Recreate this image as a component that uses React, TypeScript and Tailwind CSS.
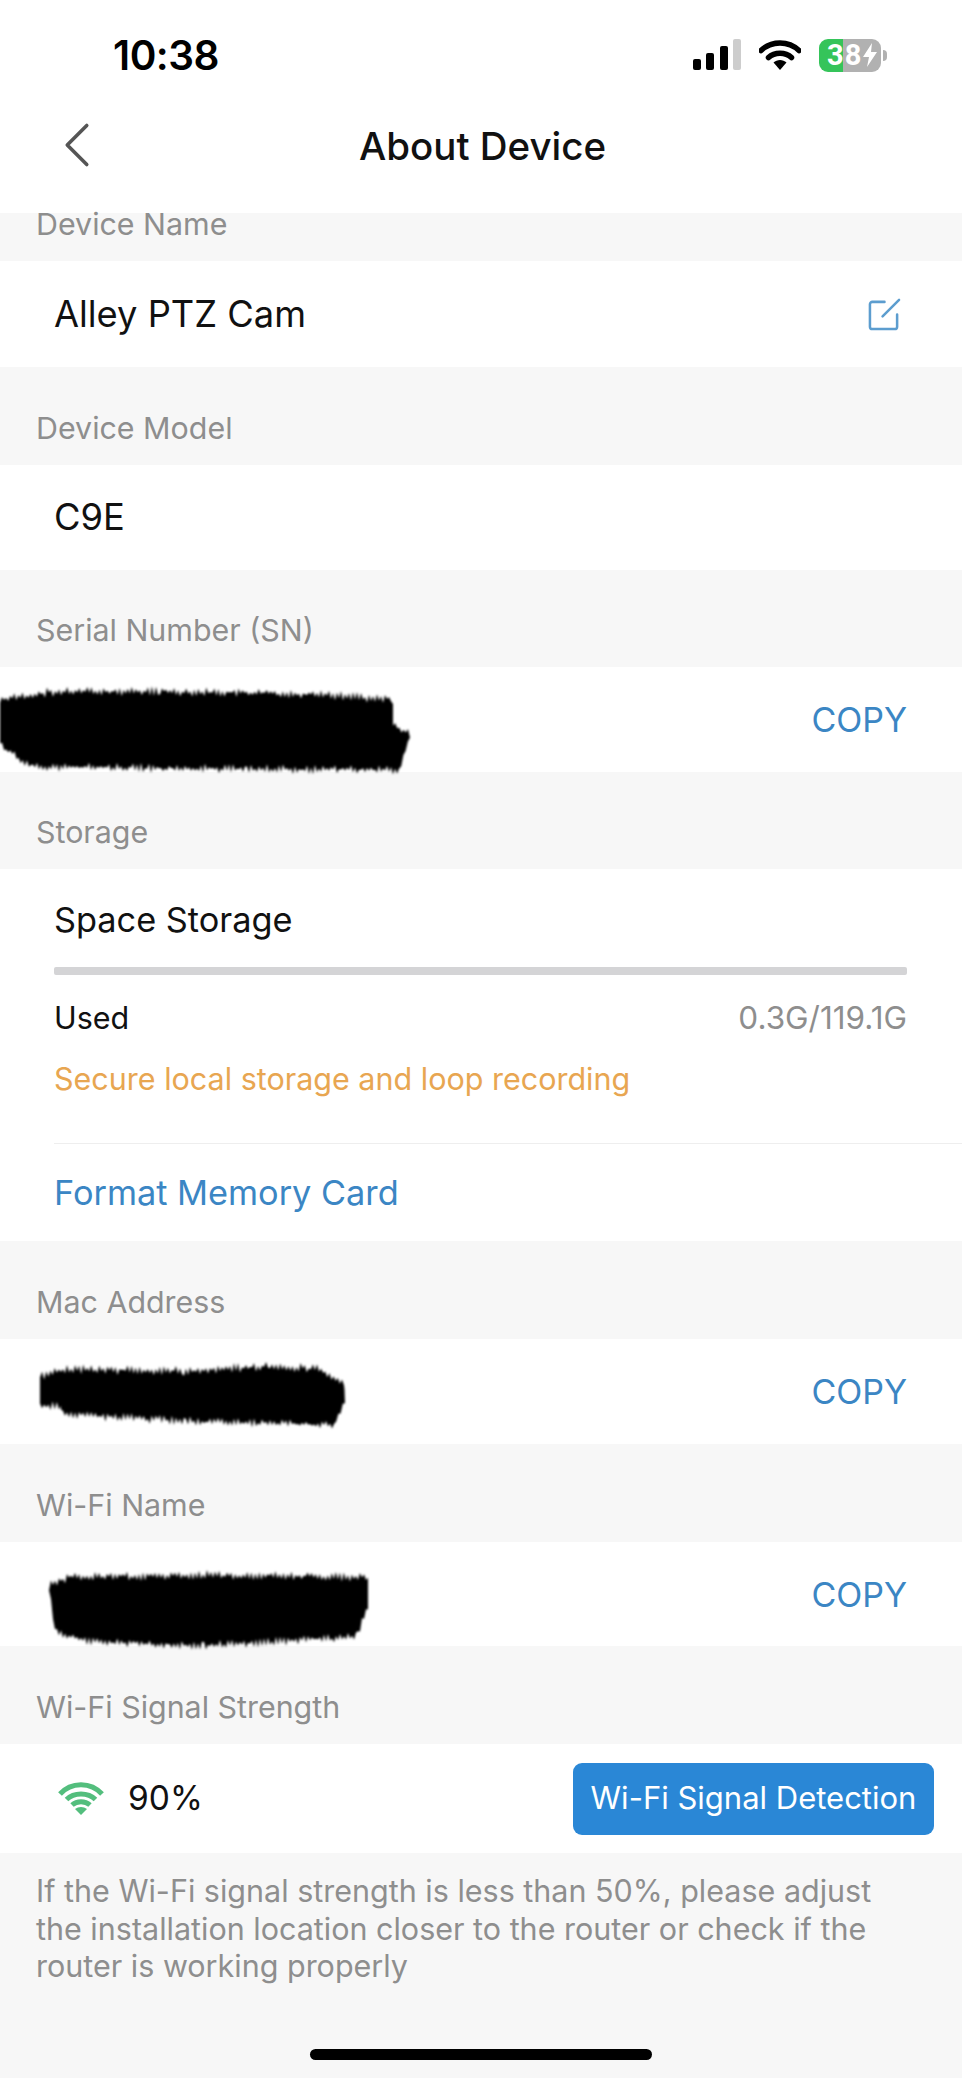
import { ChevronLeft } from "lucide-react";

const font = "font-['Inter','Liberation_Sans',sans-serif]";

// rough marker scribble: jagged outline from top and bottom edge points
function scribble(
  top: [number, number][],
  bottom: [number, number][],
  seed: number,
) {
  let s = seed;
  const rnd = () => {
    s = (s * 9301 + 49297) % 233280;
    return s / 233280;
  };
  const walk = (pts: [number, number][], dir: number) => {
    const out: string[] = [];
    for (let i = 0; i < pts.length - 1; i++) {
      const [x0, y0] = pts[i];
      const [x1, y1] = pts[i + 1];
      const steps = Math.max(2, Math.floor(Math.abs(x1 - x0) / 2));
      for (let k = 0; k < steps; k++) {
        const t = k / steps;
        const jag = (k % 2 === 0 ? 1 : -1) * rnd() * 5 * dir;
        out.push(`${(x0 + (x1 - x0) * t).toFixed(1)},${(y0 + (y1 - y0) * t + jag).toFixed(1)}`);
      }
    }
    return out;
  };
  return `M${[...walk(top, 1), ...walk(bottom, -1)].join("L")}Z`;
}

const serialBlob = scribble(
  [[0, 13], [49, 5], [160, 4], [307, 7], [393, 12], [393, 38], [410, 48], [399, 83]],
  [[399, 83], [245, 82], [31, 80], [0, 58], [0, 13]],
  7,
);
const macBlob = scribble(
  [[0, 14], [21, 6], [144, 8], [230, 3], [279, 6], [304, 22], [305, 37], [294, 61]],
  [[294, 62], [144, 58], [21, 51], [21, 44], [0, 42], [0, 14]],
  23,
);
const wifiBlob = scribble(
  [[0, 15], [20, 6], [160, 4], [319, 6], [319, 36], [307, 66]],
  [[307, 66], [153, 75], [40, 70], [6, 62], [0, 15]],
  41,
);

function Blob({ d, w, h, className }: { d: string; w: number; h: number; className: string }) {
  return (
    <svg width={w} height={h} viewBox={`0 0 ${w} ${h}`} className={`shrink-0 overflow-visible ${className}`}>
      <filter id="marker">
        <feGaussianBlur stdDeviation="0.9" />
      </filter>
      <path d={d} fill="#000" filter="url(#marker)" />
    </svg>
  );
}

function SectionLabel({ text, height = "h-[97px]" }: { text: string; height?: string }) {
  return (
    <div className={`flex shrink-0 items-end px-[36px] pb-[17px] text-[30.4px] leading-[40px] text-[#8e8e8e] ${height}`}>
      {text}
    </div>
  );
}

function Row({ children, height = "h-[105px]" }: { children: React.ReactNode; height?: string }) {
  return (
    <div className={`flex shrink-0 items-center justify-between bg-white pl-[54px] pr-[55px] text-[36.3px] text-[#111] ${height}`}>
      {children}
    </div>
  );
}

function CopyLink() {
  return <span className="text-[34px] text-[#3b86c4]">COPY</span>;
}

function CellBars() {
  return (
    <svg width="48" height="32" viewBox="0 0 48 32" className="shrink-0">
      <rect x="0" y="20" width="8" height="11" rx="2" fill="#000" />
      <rect x="13" y="14" width="8" height="17" rx="2" fill="#000" />
      <rect x="27" y="7" width="8" height="24" rx="2" fill="#000" />
      <rect x="40" y="0" width="8" height="31" rx="2" fill="#cdcdcd" />
    </svg>
  );
}

function StatusWifi() {
  return (
    <svg width="42" height="30" viewBox="0 0 42 30" className="shrink-0">
      <path d="M2 10.5C12.5 0.5 29.5 0.5 40 10.5" fill="none" stroke="#000" strokeWidth="5.5" strokeLinecap="round" />
      <path d="M9.5 17.5C15.5 11.8 26.5 11.8 32.5 17.5" fill="none" stroke="#000" strokeWidth="5.5" strokeLinecap="round" />
      <path d="M14.5 22.5C18 19 24 19 27.5 22.5L21 30Z" fill="#000" />
    </svg>
  );
}

function Battery() {
  return (
    <div className="flex items-center">
      <div className="flex h-[33px] w-[62px] items-center overflow-hidden rounded-[9px] bg-[linear-gradient(90deg,#35c45a_39%,#b1b1b1_39%)] pl-[8px] font-['Roboto',sans-serif] text-[29px] font-bold leading-none tracking-[1px] text-white">
        <span>38</span>
        <svg width="16" height="24" viewBox="0 0 16 24" className="shrink-0">
          <path d="M10 0L1 14H7L5 24L15 9H9Z" fill="#fff" />
        </svg>
      </div>
      <div className="ml-[2px] h-[11px] w-[4px] rounded-r-full bg-[#b1b1b1]" />
    </div>
  );
}

function GreenWifi() {
  return (
    <svg width="46" height="33" viewBox="0 0 46 33" className="shrink-0">
      <g fill="none" stroke="#53be7d" strokeWidth="5">
        <path d="M2 12C13 -0.500 33 -0.500 44 12" />
        <path d="M8.500 17.500C16 10 30 10 37.500 17.500" />
        <path d="M14 23C19 18.500 27 18.500 32 23" />
      </g>
      <path d="M17 27C20.500 24.200 25.500 24.200 29 27L23 33Z" fill="#53be7d" />
    </svg>
  );
}

export default function App() {
  return (
    <div className={`flex h-[2078px] w-full flex-col overflow-hidden bg-[#f7f7f7] ${font}`}>
      <header className="h-[213px] shrink-0 bg-white">
        <div className="flex h-[110px] items-center justify-between pl-[113px] pr-[75px]">
          <span className="pt-[2px] text-[40.500px] font-semibold tracking-[-0.5px] text-black">10:38</span>
          <div className="flex items-center gap-[18px]">
            <CellBars />
            <StatusWifi />
            <Battery />
          </div>
        </div>
        <div className="relative flex h-[72px] items-center justify-center pl-[3px]">
          <ChevronLeft
            size={78}
            strokeWidth={1.1}
            className="absolute left-[38px] -top-[4px] text-[#555]"
          />
          <h1 className="text-[38.5px] font-medium leading-none text-[#111]">About Device</h1>
        </div>
      </header>

      <SectionLabel text="Device Name" height="h-[48px]" />
      <Row height="h-[106px]">
        <span>Alley PTZ Cam</span>
        <svg width="33" height="33" viewBox="0 0 34 34" fill="none" stroke="#5c9dcf" strokeWidth="2.6" strokeLinecap="round" className="mr-[6px]">
          <path d="M17 4H4.5C3 4 2 5 2 6.500V29.500C2 31 3 32 4.500 32H27.500C29 32 30 31 30 29.500V17" />
          <path d="M15 19L32 2" />
        </svg>
      </Row>

      <SectionLabel text="Device Model" height="h-[98px]" />
      <Row>
        <span>C9E</span>
      </Row>

      <SectionLabel text="Serial Number (SN)" />
      <Row>
        <Blob d={serialBlob} w={410} h={88} className="-ml-[54px] mt-[23px]" />
        <CopyLink />
      </Row>

      <SectionLabel text="Storage" />
      <section className="flex h-[372px] shrink-0 flex-col bg-white pl-[54px] text-[#111]">
        <div className="flex h-[98px] shrink-0 items-center pt-[4px] text-[34.3px]">Space Storage</div>
        <div className="mr-[55px] h-[8px] shrink-0 rounded-[2px] bg-[#d4d4d6]" />
        <div className="mr-[55px] mt-[23px] flex items-center justify-between text-[30.5px] leading-[40px]">
          <span>Used</span>
          <span className="text-[31.5px] text-[#8e8e8e]">0.3G/119.1G</span>
        </div>
        <div className="mt-[21px] text-[30.5px] leading-[40px] text-[#e8a651]">
          Secure local storage and loop recording
        </div>
        <div className="mt-[44px] border-t border-[#eeeeee] pt-[29px] text-[34.3px] leading-[40px] text-[#3b86c4]">
          Format Memory Card
        </div>
      </section>

      <SectionLabel text="Mac Address" height="h-[98px]" />
      <Row>
        <Blob d={macBlob} w={305} h={66} className="-ml-[14px] mt-[9px]" />
        <CopyLink />
      </Row>

      <SectionLabel text="Wi-Fi Name" height="h-[98px]" />
      <Row height="h-[104px]">
        <Blob d={wifiBlob} w={320} h={78} className="-ml-[5px] mt-[31px]" />
        <CopyLink />
      </Row>

      <SectionLabel text="Wi-Fi Signal Strength" height="h-[98px]" />
      <div className="flex h-[109px] shrink-0 items-center justify-between bg-white pl-[58px] pr-[28px]">
        <div className="flex items-center gap-[24px] text-[33.5px] text-[#111]">
          <GreenWifi />
          <span>90%</span>
        </div>
        <button className="flex h-[72px] w-[361px] items-center justify-center rounded-[9px] bg-[#2a87d6] text-[31px] text-white">
          Wi-Fi Signal Detection
        </button>
      </div>

      <p className="mt-[19px] pl-[36px] pr-[60px] text-[30.5px] leading-[37.5px] text-[#8e8e8e]">
        If the Wi-Fi signal strength is less than 50%, please adjust the installation location closer to the router or check if the router is working properly
      </p>

      <div className="mb-[18px] mt-auto h-[11px] w-[342px] shrink-0 self-center rounded-full bg-black" />
    </div>
  );
}
